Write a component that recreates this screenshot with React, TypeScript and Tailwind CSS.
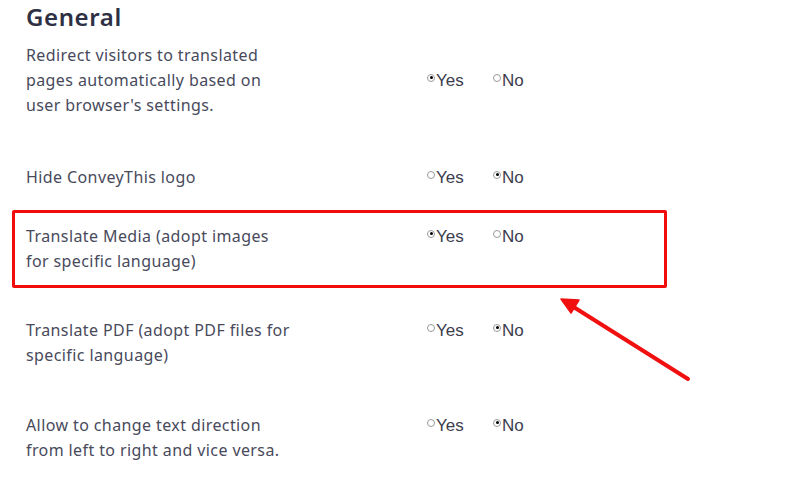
import React from "react";

const body = { fontFamily: '"Noto Sans", "Open Sans", sans-serif' };
const arial = { fontFamily: '"Liberation Sans", Arial, sans-serif' };

function Radio({ checked }: { checked: boolean }) {
  return (
    <span className="relative inline-block w-[8px] h-[8px] rounded-full border border-[#9a9a9a] bg-white mr-[1px] -translate-y-[3px] shrink-0">
      {checked && (
        <span className="absolute left-[1.5px] top-[1.5px] w-[3px] h-[3px] rounded-full bg-black" />
      )}
    </span>
  );
}

function Choice({ yes }: { yes: boolean }) {
  return (
    <div className="flex items-center text-[17px] text-[#3c3d4d] leading-[25px]" style={arial}>
      <label className="flex items-center w-[66px]">
        <Radio checked={yes} />
        <span>Yes</span>
      </label>
      <label className="flex items-center">
        <Radio checked={!yes} />
        <span>No</span>
      </label>
    </div>
  );
}

function Row({
  lines,
  yes,
  className,
  radioOffset = "",
}: {
  lines: string[];
  yes: boolean;
  className?: string;
  radioOffset?: string;
}) {
  return (
    <div className={"flex " + (className ?? "")}>
      <div
        className="w-[401px] text-[16px] leading-[25px] tracking-[0.4px] text-[#484a5c]"
        style={body}
      >
        {lines.map((l, i) => (
          <div key={i} className="whitespace-nowrap">
            {l}
          </div>
        ))}
      </div>
      <div className={radioOffset}>
        <Choice yes={yes} />
      </div>
    </div>
  );
}

export default function App() {
  return (
    <div className="relative w-[802px] h-[493px] bg-white overflow-hidden">
      <div className="pl-[26px] pt-[1px]">
        <h1
          className="text-[24px] leading-[32px] font-semibold tracking-[0.6px] text-[#2e3044]"
          style={body}
        >
          General
        </h1>
        <Row
          className="mt-[10px]"
          lines={[
            "Redirect visitors to translated",
            "pages automatically based on",
            "user browser's settings.",
          ]}
          yes={true}
          radioOffset="pt-[25px]"
        />
        <Row className="mt-[47px]" lines={["Hide ConveyThis logo"]} yes={false} />
        <Row
          className="mt-[34px]"
          lines={["Translate Media (adopt images", "for specific language)"]}
          yes={true}
        />
        <Row
          className="mt-[44px]"
          lines={["Translate PDF (adopt PDF files for", "specific language)"]}
          yes={false}
        />
        <Row
          className="mt-[45px]"
          lines={["Allow to change text direction", "from left to right and vice versa."]}
          yes={false}
        />
      </div>

      {/* highlight box */}
      <div className="absolute left-[12px] top-[210px] w-[655px] h-[78px] border-[3px] border-[#f20d0d] rounded-[2px]" />

      {/* arrow */}
      <svg className="absolute left-0 top-0" width="802" height="493">
        <line x1="688" y1="379" x2="572" y2="306" stroke="#f01010" strokeWidth="4" strokeLinecap="round" />
        <polygon points="561,299 579,300 571,313" fill="#f01010" stroke="#f01010" strokeWidth="1.5" strokeLinejoin="round" />
      </svg>
    </div>
  );
}
